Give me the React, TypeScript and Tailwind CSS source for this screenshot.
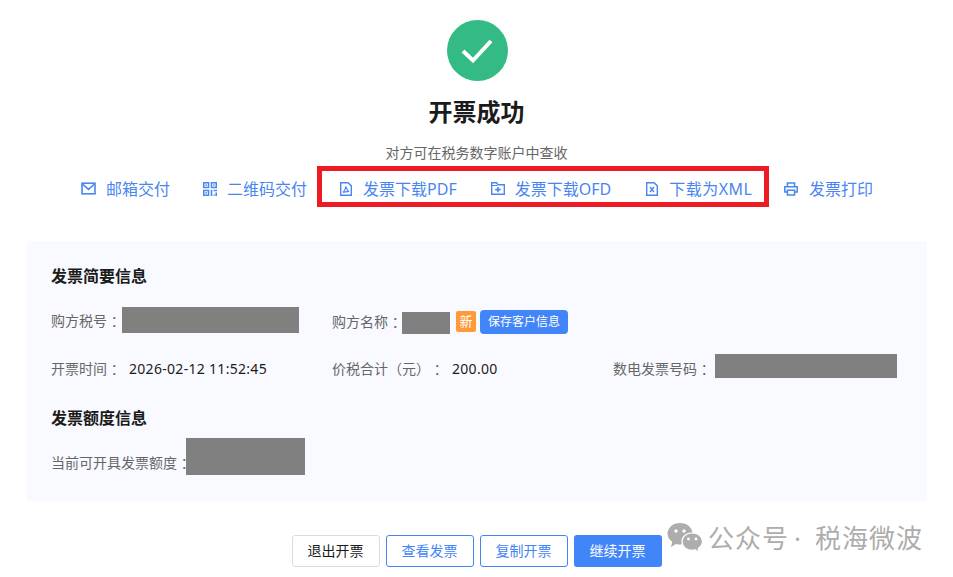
import React from 'react';

const fontStack = "font-['Noto_Sans','Noto_Sans_CJK_SC',sans-serif]";

const MailIcon = () => (
  <svg width="15" height="15" viewBox="0 0 15 15" fill="none" stroke="#4a86f0" strokeWidth="1.6">
    <rect x="1" y="2.2" width="13" height="10.6" />
    <path d="M1.500 3l6 5.400 6-5.400" />
  </svg>
);

const QrIcon = () => (
  <svg width="14" height="14" viewBox="0 0 14 14" fill="#4a86f0">
    <path fillRule="evenodd" d="M0 0h6.300v6.300H0zM1.500 1.500v3.300h3.300V1.500zM7.700 0H14v6.300H7.700zM9.200 1.500v3.300h3.300V1.500zM0 7.700h6.300V14H0zM1.500 9.200v3.300h3.300V9.200z" />
    <rect x="2.4" y="2.4" width="1.5" height="1.5" />
    <rect x="10.100" y="2.4" width="1.5" height="1.5" />
    <rect x="2.4" y="10.100" width="1.5" height="1.5" />
    <path d="M7.700 7.700h1.600V14H7.700zM10.500 7.700H14v1.600h-3.500zM12.400 10.500H14V14h-1.600zM10.500 12.400h1.200V14h-1.200z" />
  </svg>
);

const FileIcon = ({ children }: { children: React.ReactNode }) => (
  <svg width="12" height="14" viewBox="0 0 12 14" fill="none" stroke="#4a86f0" strokeWidth="1.4">
    <path d="M.7.7h7.400l3.200 3.200v9.400H.7z" />
    {children}
  </svg>
);

const FolderIcon = () => (
  <svg width="14" height="13" viewBox="0 0 14 13" fill="none" stroke="#4a86f0" strokeWidth="1.4">
    <path d="M.7 3.500V.8h5l1.300 2h6.300v9.400H.7z" />
    <path d="M.7 3.500h5.500" strokeWidth="1" />
    <path d="M4.200 7.600h5.600M7 5v5.200" strokeWidth="1.600" />
  </svg>
);

const PrintIcon = () => (
  <svg width="14" height="14" viewBox="0 0 14 14" fill="none" stroke="#4a86f0" strokeWidth="1.5">
    <path d="M3.400 4.600V1h7.200v3.600" />
    <path d="M3.200 10H.8V4.800h12.400V10h-2.400" />
    <rect x="3.4" y="8.2" width="7.2" height="4.8" />
  </svg>
);

const WechatIcon = () => (
  <svg width="36" height="30" viewBox="0 1 36 30" fill="#adadad">
    <path d="M13 1C6 1 .5 5.700.5 11.500c0 3.400 1.900 6.300 4.800 8.300L4 25l5-3c1.300.4 2.700.6 4.200.6C20 22.600 25.500 17.500 25.500 11.500 25.500 5.700 20 1 13 1z" />
    <circle cx="9" cy="9" r="1.700" fill="#fff" />
    <circle cx="17" cy="9" r="1.700" fill="#fff" />
    <path d="M35.500 19.600c0-5-4.700-8.800-10.300-8.800S15 14.600 15 19.600s4.600 8.800 10.200 8.800c1.100 0 2.200-.2 3.200-.5l3.800 2.600-1-4c2.600-1.700 4.300-4.100 4.300-6.900z" stroke="#fff" strokeWidth="1.200" />
    <circle cx="21.500" cy="17" r="1.400" fill="#fff" />
    <circle cx="29" cy="17" r="1.400" fill="#fff" />
  </svg>
);

const Action = ({ icon, label, gap, labelClass }: { icon: React.ReactNode; label: string; gap: string; labelClass?: string }) => (
  <div className={`mt-[4px] flex items-center ${gap} text-base leading-6 text-[#4a86f0]`}>
    {icon}
    <span className={labelClass}>{label}</span>
  </div>
);

export default function App() {
  return (
    <div className={`relative h-[577px] w-[953px] overflow-hidden bg-white ${fontStack}`}>
      <div className="flex flex-col items-center pt-5">
        <div className="ml-[1px] flex h-[61px] w-[61px] items-center justify-center rounded-full bg-[#33ba85]">
          <svg width="32" height="26" viewBox="0 0 32 26" fill="none" stroke="#fff" strokeWidth="4">
            <path d="M2 13l10 9.500L30 3" />
          </svg>
        </div>
        <h1 className="mt-[15px] text-[24px] leading-8 font-bold text-[#1b1b1b]">开票成功</h1>
        <p className="mt-[13px] text-sm leading-6 text-[#666]">对方可在税务数字账户中查收</p>
      </div>

      {/* Delivery actions */}
      <div className="mt-[1px] flex h-[41px] items-stretch pl-[81px]">
        <div className="flex items-center">
          <Action icon={<MailIcon />} label="邮箱交付" gap="gap-[10px]" />
          <div className="ml-[33px]">
            <Action icon={<QrIcon />} label="二维码交付" gap="gap-[10px]" />
          </div>
        </div>
        <div className="ml-[10px] flex w-[452px] items-center border-[5px] border-[#ed1c24] pl-[18px]">
          <Action
            icon={<FileIcon><path d="M6 4.500c-.6 2.500-1.700 4.700-3 6 2-.8 4-1 6-.8-1.500-1-2.500-3-3-5.200z" strokeWidth="1.100" /></FileIcon>}
            label="发票下载PDF"
            gap="gap-[11px]"
          />
          <div className="ml-[34px]">
            <Action icon={<FolderIcon />} label="发票下载OFD" gap="gap-[10px]" />
          </div>
          <div className="ml-[35px]">
            <Action
              icon={<FileIcon><path d="M4 5l4 5M8 5l-4 5" strokeWidth="1.400" /></FileIcon>}
              label="下载为XML"
              gap="gap-[11px]"
              labelClass="tracking-[0.5px]"
            />
          </div>
        </div>
        <div className="ml-[15px] flex items-center">
          <Action icon={<PrintIcon />} label="发票打印" gap="gap-[11px]" />
        </div>
      </div>

      {/* Invoice summary */}
      <div className="mx-[27px] mt-[34px] h-[260px] w-[900px] bg-[#f9faff] pt-[23px] pl-[24px]">
        <h2 className="text-base leading-6 font-bold text-[#1b1b1b]">发票简要信息</h2>
        <div className="mt-[19px] grid grid-cols-[281px_281px_1fr] text-sm text-[#666]">
          <div className="flex h-[26px] items-center">
            <span className="mt-[2px] w-[71px] shrink-0 whitespace-pre">购方税号 ：</span>
            <div className="h-[26px] w-[177px] bg-[#808080]" />
          </div>
          <div className="flex h-[26px] items-center">
            <span className="mt-[4px] w-[70px] shrink-0 whitespace-pre">购方名称 ：</span>
            <div className="mt-[6px] h-[22px] w-[48px] bg-[#808080]" />
            <span className="mt-[3px] ml-[6px] flex h-[21px] w-[20px] items-center justify-center rounded-[2px] bg-[#ff9a38] text-[13px] text-white">新</span>
            <button className="mt-[4px] ml-[4px] h-[24px] w-[88px] rounded-[4px] bg-[#4285f8] text-xs text-white">保存客户信息</button>
          </div>
          <div />
          <div className="mt-[21px] flex h-[24px] items-center pt-[6px]">
            <span className="w-[78px] shrink-0 whitespace-pre">开票时间 ：</span>
            <span className="tracking-[0.3px] text-[#1b1b1b]">2026-02-12 11:52:45</span>
          </div>
          <div className="mt-[21px] flex h-[24px] items-center pt-[6px]">
            <span className="w-[120px] shrink-0 whitespace-pre">价税合计（元） ：</span>
            <span className="tracking-[0.3px] text-[#1b1b1b]">200.00</span>
          </div>
          <div className="mt-[21px] flex h-[24px] items-center">
            <span className="mt-[6px] w-[102px] shrink-0 whitespace-pre">数电发票号码 ：</span>
            <div className="h-[24px] w-[182px] bg-[#808080]" />
          </div>
        </div>
        <h2 className="mt-[28px] text-base leading-6 font-bold text-[#1b1b1b]">发票额度信息</h2>
        <div className="mt-[8px] flex h-[37px] items-center text-sm text-[#666]">
          <span className="mt-[13px] w-[135px] shrink-0 whitespace-pre">当前可开具发票额度 ：</span>
          <div className="h-[37px] w-[119px] bg-[#808080]" />
        </div>
      </div>

      {/* Footer buttons */}
      <div className="mt-[34px] flex justify-center gap-[6px] text-sm">
        <button className="h-8 w-[88px] rounded-[3px] border border-[#dcdcdc] bg-white text-[#1b1b1b]">退出开票</button>
        <button className="h-8 w-[88px] rounded-[3px] border border-[#4285f8] bg-white text-[#4285f8]">查看发票</button>
        <button className="h-8 w-[88px] rounded-[3px] border border-[#4285f8] bg-white text-[#4285f8]">复制开票</button>
        <button className="h-8 w-[88px] rounded-[3px] bg-[#4285f8] text-white">继续开票</button>
      </div>

      {/* Watermark */}
      <div className="absolute top-[520px] left-[667px] flex h-9 items-center text-[26px] leading-9 tracking-[1px] text-[#adadad]">
        <WechatIcon />
        <span className="ml-[5px]">公众号</span>
        <span className="w-[26px] pr-[8px] text-center">·</span>
        <span>税海微波</span>
      </div>
    </div>
  );
}
